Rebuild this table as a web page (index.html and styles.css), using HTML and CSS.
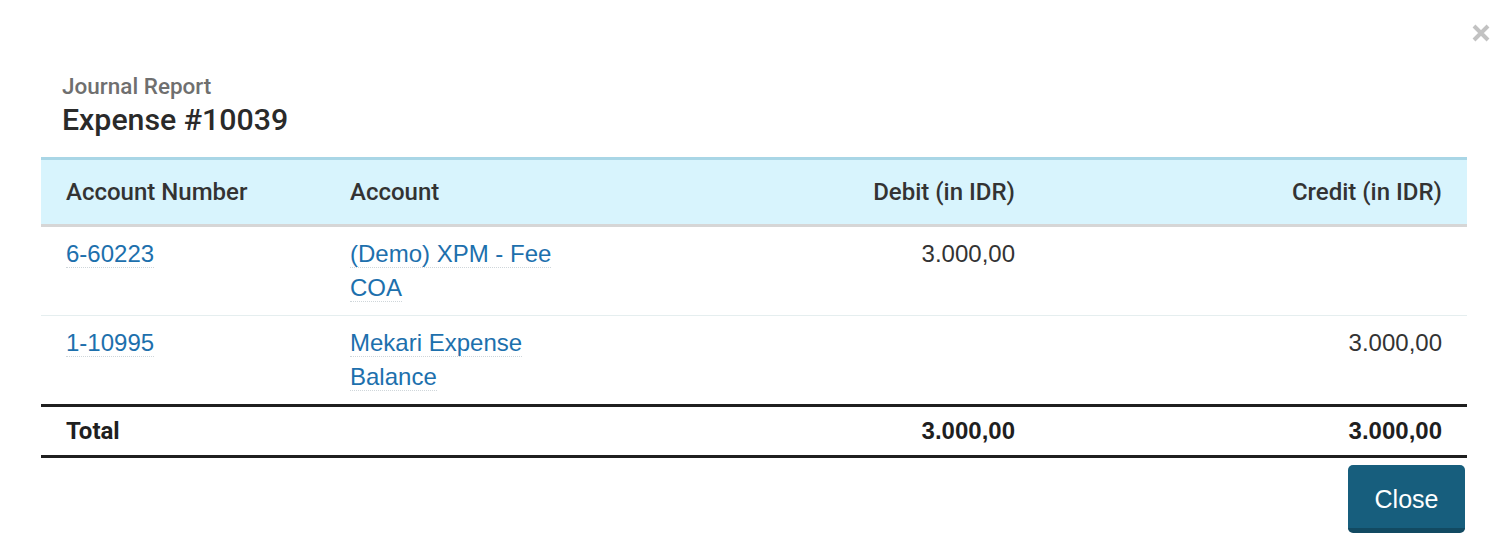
FILE: index.html
```html
<!DOCTYPE html>
<html>
<head>
<meta charset="utf-8">
<link rel="stylesheet" href="styles.css">
</head>
<body>
<div class="modal">
  <button class="dismiss" type="button" aria-label="Close">
    <svg width="18" height="18" viewBox="0 0 18 18"><path d="M2 2 L16 16 M16 2 L2 16" stroke="#c2c2c2" stroke-width="4" stroke-linecap="butt"/></svg>
  </button>
  <div class="modal-header">
    <div class="subtitle">Journal Report</div>
    <div class="title">Expense #10039</div>
  </div>
  <table class="journal">
    <colgroup>
      <col class="c-num"><col class="c-acc"><col class="c-deb"><col class="c-cred">
    </colgroup>
    <thead>
      <tr>
        <th>Account Number</th>
        <th>Account</th>
        <th class="r">Debit (in IDR)</th>
        <th class="r">Credit (in IDR)</th>
      </tr>
    </thead>
    <tbody>
      <tr>
        <td><a class="lnk">6-60223</a></td>
        <td><div class="acc"><a class="lnk">(Demo) XPM - Fee COA</a></div></td>
        <td class="r">3.000,00</td>
        <td class="r"></td>
      </tr>
      <tr>
        <td><a class="lnk">1-10995</a></td>
        <td><div class="acc"><a class="lnk">Mekari Expense Balance</a></div></td>
        <td class="r"></td>
        <td class="r">3.000,00</td>
      </tr>
    </tbody>
    <tfoot>
      <tr>
        <td class="tot-label">Total</td>
        <td></td>
        <td class="r tot">3.000,00</td>
        <td class="r tot">3.000,00</td>
      </tr>
    </tfoot>
  </table>
  <div class="modal-footer">
    <button class="btn-close" type="button">Close</button>
  </div>
</div>
</body>
</html>
```
FILE: styles.css
```css
html, body {
  margin: 0;
  padding: 0;
  background: #ffffff;
}
.modal {
  position: relative;
  padding: 0 41px;
  font-family: "Liberation Sans", Arial, sans-serif;
  color: #333;
}
.dismiss {
  position: absolute;
  top: 24px;
  right: 18px;
  border: 0;
  background: none;
  padding: 0;
  width: 18px;
  height: 18px;
  display: flex;
}
.modal-header {
  padding: 72px 21px 17px;
  font-family: Roboto, sans-serif;
}
.subtitle {
  font-size: 22.5px;
  font-weight: 500;
  color: #6f6f6f;
  line-height: 28px;
}
.title {
  font-size: 30.3px;
  font-weight: 500;
  color: #2a2a2a;
  line-height: 40px;
}
.journal {
  width: 100%;
  border-collapse: collapse;
  table-layout: fixed;
}
.c-num { width: 284px; }
.c-acc { width: 380px; }
.c-deb { width: 335px; }
.c-cred { width: 427px; }
.journal th {
  background: #d8f4fd;
  border-top: 3px solid #a9d6e6;
  border-bottom: 3px solid #d6d6d6;
  font-family: Roboto, sans-serif;
  font-weight: 500;
  font-size: 24px;
  color: #333;
  text-align: left;
  height: 67px;
  padding: 0 25px;
  box-sizing: border-box;
}
.journal td {
  padding: 10px 25px;
  font-size: 24px;
  line-height: 34px;
  vertical-align: top;
  color: #333;
}
.journal tbody tr + tr td {
  border-top: 1px solid #e5eeef;
}
.journal .r { text-align: right; }
.acc { max-width: 220px; }
.lnk {
  color: #1d70ad;
  border-bottom: 1px dotted #cfd6da;
  text-decoration: none;
}
.journal tfoot td {
  border-top: 3px solid #1f1f1f;
  border-bottom: 3px solid #1f1f1f;
  padding: 7px 25px;
  font-weight: 700;
  color: #1f1f1f;
}
.tot-label {
  font-family: Roboto, sans-serif;
}
.modal-footer {
  display: flex;
  justify-content: flex-end;
  padding: 7px 2px 0 0;
}
.btn-close {
  width: 117px;
  height: 68px;
  background: #175e7d;
  border: 0;
  border-bottom: 5px solid #124a62;
  border-radius: 5px;
  color: #ffffff;
  font-family: "Liberation Sans", Arial, sans-serif;
  font-size: 25px;
  padding: 6px 0 0;
  box-sizing: border-box;
}
```
